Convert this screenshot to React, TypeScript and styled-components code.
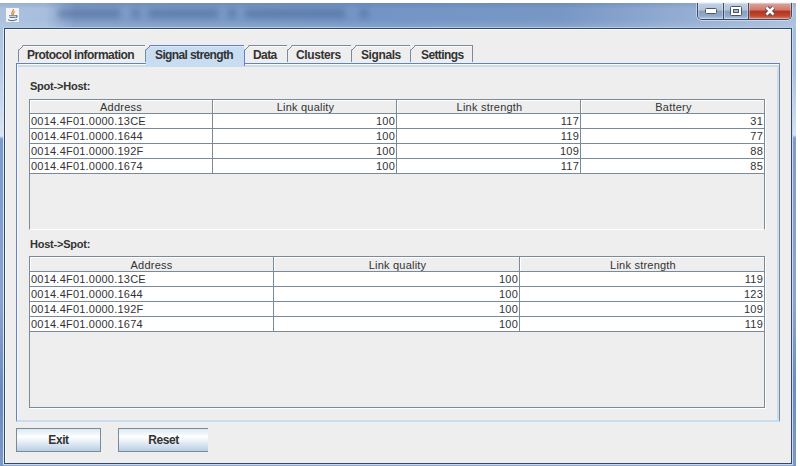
import styled, { createGlobalStyle } from 'styled-components'

const GlobalStyle = createGlobalStyle`
  * {
    box-sizing: border-box;
  }
  body {
    margin: 0;
    background-color: white;
    font-family: 'Liberation Sans', Arial, sans-serif;
    color: #333;
  }
`

const Page = styled.div`
  width: 800px;
  height: 466px;
  padding-top: 3px;
  overflow: hidden;
`

const Window = styled.div`
  width: 796px;
  height: 463px;
  padding: 0 3px 1px;
  background:
    linear-gradient(#a5bddc, #b9cde6 70px, #dbe6f4 133px, #7c9bcb 136px, #88a4d0 300px, #6b8abc 390px, #7c9ac8) left / 4px 100%
      no-repeat,
    linear-gradient(#a5bddc, #a9c0e0 70px, #d6e2f2 132px, #7f9ccd 135px, #8ba6d2 300px, #6d8dbf 380px, #7c98c6) right / 4px 100%
      no-repeat,
    #8ca8d2;
`

const TitleBar = styled.div`
  display: flex;
  justify-content: space-between;
  height: 24px;
  margin: 0 -3px;
  padding: 0 4px 0 6px;
  position: relative;
  background:
    linear-gradient(rgba(30, 60, 120, 0.12), transparent 25%, transparent 70%, rgba(220, 235, 240, 0.15)),
    linear-gradient(90deg, #abc1de, #a7bedd 45px, #809dc6 75px, #7395c5 380px, #7897c5 560px, #91abd1 670px, #a9bfde);
  svg {
    display: block;
  }
`

const JavaIcon = styled.svg`
  width: 13px;
  height: 14px;
  margin-top: 5px;
`

const Shade = styled.div<{ $left: number; $width: number }>`
  position: absolute;
  left: ${(p) => p.$left}px;
  width: ${(p) => p.$width}px;
  top: 6px;
  height: 9px;
  background-color: #3f5d8c;
  opacity: 0.46;
  filter: blur(3px);
`

const WindowButtons = styled.div`
  display: flex;
  height: 17px;
  border: 1px solid #3d4b62;
  border-top: none;
  border-radius: 0 0 5px 5px;
  overflow: hidden;
  box-shadow: 0 0 0 1px rgba(225, 236, 250, 0.6);
`

const WindowButton = styled.div<{ $width: number; $close?: boolean }>`
  display: flex;
  align-items: center;
  justify-content: center;
  width: ${(p) => p.$width}px;
  background: ${(p) =>
    p.$close
      ? 'linear-gradient(#dda49b, #cf7668 45%, #b43220 50%, #bf4730 80%, #d9826a)'
      : 'linear-gradient(#c3d0e2, #b1c2d9 45%, #899fbe 50%, #91a8c8 80%, #b2c7e1)'};
  box-shadow: inset 0 0 0 1px rgba(255, 255, 255, 0.35);
  & + & {
    border-left: 1px solid #3d4b62;
  }
`

const Body = styled.div`
  height: 438px;
  padding: 17px 12px 0 13px;
  border: 1px solid #c9daf0;
  border-top: 1px solid #b7cbe4;
  border-width: 1px 1px 1px 0;
  background-color: #eee;
  box-shadow:
    inset 1px 0 #dce8f6,
    inset 2px 1px #334869,
    inset -1px -1px #334869,
    inset 3px 2px #fafafa;
`

const Tabs = styled.div`
  display: flex;
  height: 18px;
  padding-left: 2px;
  position: relative;
`

const Tab = styled.div<{ $width: number; $indent: number; $spacing: number; $selected?: boolean }>`
  position: relative;
  width: ${(p) => p.$width}px;
  height: ${(p) => (p.$selected ? 21 : 17)}px;
  padding-left: ${(p) => p.$indent}px;
  border-top: 1px solid ${(p) => (p.$selected ? '#6382bf' : '#7a8a99')};
  border-right: 1px solid ${(p) => (p.$selected ? '#6382bf' : '#7a8a99')};
  background-color: ${(p) => (p.$selected ? '#c8ddf2' : '#eee')};
  box-shadow: inset 0 1px ${(p) => (p.$selected ? '#d9e8f7' : '#fafafa')};
  font-size: 12px;
  font-weight: bold;
  line-height: 18px;
  letter-spacing: ${(p) => p.$spacing}px;
  white-space: nowrap;
  &:first-child {
    border-left: 1px solid #7a8a99;
  }
`

const Notch = styled.svg`
  position: absolute;
  top: -1px;
  left: -1px;
  width: 6px;
  height: 6px;
`

const Pane = styled.div`
  height: 359px;
  padding: 13px 12px 0;
  border: 1px solid #6382bf;
  border-right-color: #7a8a99;
  border-bottom: 2px solid #c8ddf2;
  box-shadow:
    inset 1px 1px #f8fafd,
    inset -2px 0 #c8ddf2,
    inset 0 3px #c8ddf2;
`

const Label = styled.div`
  height: 22px;
  padding-left: 1px;
  font-size: 11px;
  font-weight: bold;
  line-height: 18px;
  letter-spacing: -0.22px;
`

const ScrollPane = styled.div<{ $height: number; $open?: boolean }>`
  width: 736px;
  height: ${(p) => p.$height}px;
  margin-top: ${(p) => (p.$open ? 0 : -1)}px;
  margin-bottom: ${(p) => (p.$open ? 5 : 0)}px;
  border: 1px solid #7a8a99;
  border-bottom-color: ${(p) => (p.$open ? 'white' : '#7a8a99')};
  box-shadow: 1px ${(p) => (p.$open ? 0 : 1)}px white;
`

const Row = styled.div<{ $columns: string }>`
  display: grid;
  grid-template-columns: ${(p) => p.$columns};
`

const HeaderCell = styled.div<{ $height: number }>`
  height: ${(p) => p.$height}px;
  border-right: 1px solid #7a8a99;
  border-bottom: 1px solid #7a8a99;
  box-shadow: inset 1px 1px white;
  font-size: 11px;
  line-height: ${(p) => p.$height + 1}px;
  letter-spacing: 0.22px;
  text-align: center;
  & + & {
    padding-left: 2px;
  }
  &:last-child {
    border-right: none;
  }
`

const Cell = styled.div<{ $number?: boolean }>`
  height: 15px;
  padding: 0 1px;
  border-right: 1px solid #7a8a99;
  border-bottom: 1px solid #7a8a99;
  background-color: white;
  font-size: 11px;
  line-height: 15px;
  letter-spacing: 0.22px;
  text-align: ${(p) => (p.$number ? 'right' : 'left')};
  &:last-child {
    border-right: none;
  }
`

const Actions = styled.div`
  display: flex;
  gap: 17px;
  padding-top: 6px;
`

const Button = styled.button<{ $width: number; $cut?: boolean }>`
  width: ${(p) => p.$width}px;
  height: 24px;
  padding: 0;
  border: 1px solid #7a8a99;
  border-right: ${(p) => (p.$cut ? 'none' : '1px solid #7a8a99')};
  background: linear-gradient(#dce8f3, #fff 35%, #f0f5fa 50%, #b8cfe5);
  color: #333;
  font-family: inherit;
  font-size: 12px;
  font-weight: bold;
  letter-spacing: -0.4px;
`

const tabs = [
  { name: 'Protocol information', width: 128, indent: 8, spacing: -0.55 },
  { name: 'Signal strength', width: 99, indent: 9, spacing: -0.62 },
  { name: 'Data', width: 43, indent: 8, spacing: -0.6 },
  { name: 'Clusters', width: 64, indent: 8, spacing: -0.4 },
  { name: 'Signals', width: 59, indent: 9, spacing: -0.4 },
  { name: 'Settings', width: 62, indent: 10, spacing: -0.6 },
]

const spotToHost = [
  ['0014.4F01.0000.13CE', '100', '117', '31'],
  ['0014.4F01.0000.1644', '100', '119', '77'],
  ['0014.4F01.0000.192F', '100', '109', '88'],
  ['0014.4F01.0000.1674', '100', '117', '85'],
]

const hostToSpot = [
  ['0014.4F01.0000.13CE', '100', '119'],
  ['0014.4F01.0000.1644', '100', '123'],
  ['0014.4F01.0000.192F', '100', '109'],
  ['0014.4F01.0000.1674', '100', '119'],
]

interface TableProps {
  columns: string
  headers: string[]
  rows: string[][]
  headerHeight: number
}

function Table({ columns, headers, rows, headerHeight }: TableProps) {
  return (
    <div>
      <Row $columns={columns}>
        {headers.map((h) => (
          <HeaderCell key={h} $height={headerHeight}>
            {h}
          </HeaderCell>
        ))}
      </Row>
      {rows.map((row) => (
        <Row key={row[0]} $columns={columns}>
          {row.map((value, i) => (
            <Cell key={i} $number={i > 0}>
              {value}
            </Cell>
          ))}
        </Row>
      ))}
    </div>
  )
}

function App() {
  return (
    <Page>
      <GlobalStyle />
      <Window>
        <TitleBar>
          <Shade $left={58} $width={62} />
          <Shade $left={132} $width={8} />
          <Shade $left={148} $width={70} />
          <Shade $left={228} $width={8} />
          <Shade $left={245} $width={100} />
          <Shade $left={360} $width={8} />
          <JavaIcon viewBox="0 0 13 14">
            <rect width="13" height="14" fill="#f3f4f4" />
            <path d="M7.5 1.2C8 3 4.2 3.8 6.2 7M9 3.5C6.5 4.5 7.8 5.5 7 7" fill="none" stroke="#e78a3c" strokeWidth="1.3" />
            <path d="M3 7.8h6.5M3.6 9.5h5.2M2 11.7c2.5 1 6.5 1 9-.2M9.5 7.7c2.5-.5 2 1.7-.2 2" fill="none" stroke="#587896" strokeWidth="1.1" />
          </JavaIcon>
          <WindowButtons>
            <WindowButton $width={25}>
              <svg width="12" height="6">
                <rect x="0.5" y="0.5" width="11" height="5" rx="1" fill="#fff" stroke="#4c5669" />
              </svg>
            </WindowButton>
            <WindowButton $width={25}>
              <svg width="12" height="10">
                <rect x="0.5" y="0.5" width="11" height="9" rx="1" fill="#fff" stroke="#4c5669" />
                <rect x="3.5" y="3.5" width="5" height="3" fill="#a9bad1" stroke="#4c5669" />
              </svg>
            </WindowButton>
            <WindowButton $width={43} $close>
              <svg width="12" height="10">
                <path d="M2.5 1.5l7 7M9.5 1.5l-7 7" stroke="#5d3f46" strokeWidth="4.4" />
                <path d="M2.5 1.5l7 7M9.5 1.5l-7 7" stroke="#fff" strokeWidth="2.5" />
              </svg>
            </WindowButton>
          </WindowButtons>
        </TitleBar>
        <Body>
          <Tabs>
            {tabs.map((tab, i) => (
              <Tab key={tab.name} $width={tab.width} $indent={tab.indent} $spacing={tab.spacing} $selected={i === 1}>
                <Notch viewBox="0 0 6 6">
                  <path d="M0 0h5L0 5z" fill="#eee" />
                  <path d="M0.5 5.5l5-5" stroke={i === 1 ? '#6382bf' : '#7a8a99'} fill="none" />
                </Notch>
                {tab.name}
              </Tab>
            ))}
          </Tabs>
          <Pane>
            <Label>Spot-&gt;Host:</Label>
            <ScrollPane $height={131} $open>
              <Table
                columns="183px 184px 184px 183px"
                headers={['Address', 'Link quality', 'Link strength', 'Battery']}
                rows={spotToHost}
                headerHeight={14}
              />
            </ScrollPane>
            <Label>Host-&gt;Spot:</Label>
            <ScrollPane $height={152}>
              <Table
                columns="244px 246px 244px"
                headers={['Address', 'Link quality', 'Link strength']}
                rows={hostToSpot}
                headerHeight={15}
              />
            </ScrollPane>
          </Pane>
          <Actions>
            <Button $width={85}>Exit</Button>
            <Button $width={90} $cut>
              Reset
            </Button>
          </Actions>
        </Body>
      </Window>
    </Page>
  )
}

export default App
